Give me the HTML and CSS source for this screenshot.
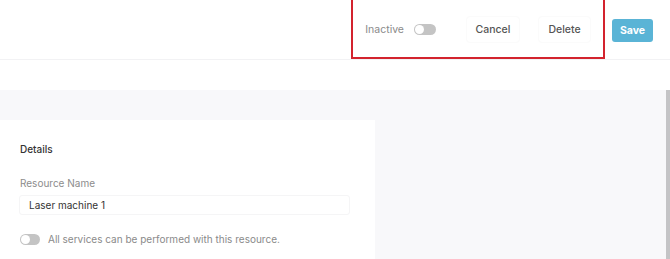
FILE: index.html
```html
<!DOCTYPE html>
<html lang="en">
<head>
    <meta charset="UTF-8">
    <meta name="viewport" content="width=device-width, initial-scale=1.0">
    <title>Resource</title>
    <link rel="stylesheet" href="styles.css">
</head>
<body>
    <header class="topbar">
        <div class="status">
            <span class="status-label">Inactive</span>
            <span class="toggle"></span>
        </div>
        <button class="btn btn-light">Cancel</button>
        <button class="btn btn-light btn-delete">Delete</button>
        <button class="btn btn-save">Save</button>
        <div class="highlight"></div>
    </header>

    <div class="spacer"></div>

    <main class="content">
        <section class="card">
            <h3 class="card-title">Details</h3>
            <label class="field-label" for="resName">Resource Name</label>
            <input class="field-input" id="resName" type="text" value="Laser machine 1">
            <div class="switch-row">
                <span class="toggle"></span>
                <span class="switch-text">All services can be performed with this resource.</span>
            </div>
        </section>
        <div class="filler"></div>
        <div class="scrollbar"></div>
    </main>
</body>
</html>
```

FILE: styles.css
```css
body {
    margin: 0;
    width: 670px;
    height: 259px;
    overflow: hidden;
    background-color: #ffffff;
    font-family: Inter, "Noto Sans", sans-serif;
    color: #333;
}

.topbar {
    position: relative;
    height: 59px;
    display: flex;
    align-items: center;
    justify-content: flex-end;
    padding-right: 17px;
    border-bottom: 1px solid #f2f2f4;
}

.status {
    display: flex;
    align-items: center;
    margin-right: 31px;
}

.status-label {
    font-size: 10.5px;
    color: #8a8a8a;
    margin-right: 10px;
}

.toggle {
    display: inline-block;
    position: relative;
    width: 22px;
    height: 11px;
    border-radius: 6px;
    background-color: #c4c4c4;
}

.toggle::after {
    content: "";
    position: absolute;
    left: 1px;
    top: 1px;
    width: 9px;
    height: 9px;
    border-radius: 50%;
    background-color: #fff;
}

.btn {
    font-family: inherit;
    font-size: 10.5px;
    border: none;
    border-radius: 3px;
    cursor: pointer;
}

.btn-light {
    width: 52px;
    height: 25px;
    background-color: #fff;
    color: #555;
    font-weight: 500;
    box-shadow: 0 0 2px rgba(0, 0, 0, 0.07);
    margin-right: 20px;
}

.btn-delete {
    width: 51px;
    margin-right: 22px;
}

.btn-save {
    width: 41px;
    height: 23px;
    background-color: #5ab4d6;
    color: #fff;
    font-weight: 700;
    margin-top: 2px;
}

.highlight {
    position: absolute;
    left: 351px;
    top: -4px;
    width: 250px;
    height: 59px;
    border: 2px solid #d3232e;
    pointer-events: none;
}

.spacer {
    height: 30px;
}

.content {
    display: flex;
    height: 169px;
    background-color: #f8f8fa;
    padding-top: 30px;
    box-sizing: border-box;
}

.card {
    width: 375px;
    background-color: #fff;
    padding: 23px 25px 0 20px;
    box-sizing: border-box;
}

.card-title {
    margin: 0 0 22px;
    font-size: 10px;
    font-weight: 500;
    color: #333;
}

.field-label {
    display: block;
    font-size: 10px;
    color: #8c8c8c;
    margin-bottom: 6px;
}

.field-input {
    display: block;
    width: 331px;
    height: 20px;
    box-sizing: border-box;
    margin-left: -1px;
    padding: 0 9px;
    border: 1px solid #f5f5f6;
    border-radius: 3px;
    font-family: inherit;
    font-size: 10px;
    color: #333;
    background-color: #fff;
}

.switch-row {
    display: flex;
    align-items: center;
    margin-top: 18px;
}

.switch-row .toggle {
    width: 20px;
    margin-right: 8px;
}

.switch-text {
    font-size: 10px;
    color: #8a8a8a;
}

.filler {
    flex-grow: 1;
}

.scrollbar {
    width: 4px;
    margin-top: -30px;
    background-color: #c4c4c6;
}
```
